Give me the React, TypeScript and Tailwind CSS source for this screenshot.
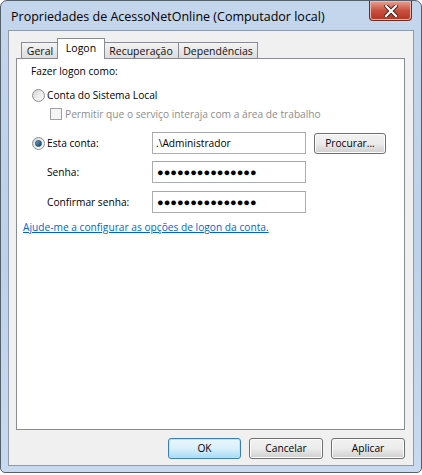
import React from "react";

const font = { fontFamily: "'Open Sans', 'Noto Sans', sans-serif" };

function Radio({ checked }: { checked?: boolean }) {
  return (
    <span className="relative inline-flex h-[13px] w-[13px] shrink-0 items-center justify-center rounded-full border border-[#8e8f8f] bg-gradient-to-br from-[#d4d4d4] via-[#ececec] to-[#fafafa]">
      {checked && (
        <span className="h-[7px] w-[7px] rounded-full border border-[#1d4f76] bg-gradient-to-br from-[#6aa8d4] to-[#0e3e63]" />
      )}
    </span>
  );
}

function Tab({ label, selected, w, ml }: { label: string; selected?: boolean; w: string; ml: string }) {
  if (selected) {
    return (
      <div
        className={
          "relative z-10 mb-[-1px] flex h-[21px] justify-center border border-b-0 border-[#898c95] bg-white pt-[2px] text-[10.5px] leading-[14px] text-black " +
          w +
          " " +
          ml
        }
      >
        {label}
      </div>
    );
  }
  return (
    <div
      className={
        "flex h-[16px] items-center justify-center border border-b-0 border-[#898c95] bg-gradient-to-b from-[#f4f4f4] to-[#dcdcdc] text-[10.5px] leading-[14px] text-[#111] " +
        w +
        " " +
        ml
      }
    >
      {label}
    </div>
  );
}

function Field({ value, dots }: { value?: string; dots?: boolean }) {
  return (
    <div className="flex h-[22px] w-[154px] items-center border border-[#abadb3] border-t-[#a3a6ad] bg-white px-[3px] text-[10.2px]">
      {dots ? (
        <span className="pl-[1px] text-[11px] tracking-[0px] text-black">{"●●●●●●●●●●●●●●●"}</span>
      ) : (
        <span>{value}</span>
      )}
    </div>
  );
}

function Btn({ label, w, def }: { label: string; w: string; def?: boolean }) {
  return (
    <div
      className={
        "flex h-[21px] items-center justify-center rounded-[3px] border text-[10.2px] text-black " +
        w +
        (def
          ? " border-[#3c7fb1] bg-gradient-to-b from-[#eaf6fd] via-[#d9f0fc] to-[#a7d9f5] shadow-[inset_0_0_0_1px_#b8e4fb]"
          : " border-[#707070] bg-gradient-to-b from-[#f2f2f2] via-[#ebebeb] to-[#cfcfcf] shadow-[inset_0_0_0_1px_#fcfcfc]")
      }
    >
      {label}
    </div>
  );
}

export default function App() {
  return (
    <div style={font} className="h-[475px] w-[422px] bg-white">
      <div className="relative flex h-[473px] w-[422px] flex-col rounded-t-[7px] rounded-b-[5px] border border-[#55606d] bg-gradient-to-b from-[#c4d6ec] via-[#bcd1ea] to-[#c8daef]">
        {/* title bar */}
        <div className="flex h-[29px] items-center pl-[10px] pt-[3px] text-[12.5px] text-black">
          Propriedades de AcessoNetOnline (Computador local)
        </div>
        {/* close button */}
        <div className="absolute right-[9px] top-0 flex h-[20px] w-[43px] items-center justify-center rounded-b-[4px] border border-t-0 border-[#6d2a24] bg-gradient-to-b from-[#e8a193] via-[#c8503f] to-[#b5321f] shadow-[inset_0_0_0_1px_#f0b9ae]">
          <svg width="14" height="12" viewBox="0 0 14 12">
            <path d="M2 1 L12 11 M12 1 L2 11" stroke="#3b1d1a" strokeWidth="4" strokeLinecap="square" />
            <path d="M2 1 L12 11 M12 1 L2 11" stroke="#ffffff" strokeWidth="2.2" strokeLinecap="square" />
          </svg>
        </div>

        {/* client area */}
        <div className="mx-[7px] flex h-[436px] flex-col border border-[#8d9bb0] bg-[#f0f0f0] pl-[7px] pr-[8px] pt-[7px]">
          {/* tabs */}
          <div className="flex h-[20px] items-end pl-[5px]">
            <Tab label="Geral" w="w-[38px]" ml="ml-0" />
            <Tab label="Logon" selected w="w-[48px]" ml="-ml-[2px]" />
            <Tab label="Recuperação" w="w-[76px]" ml="-ml-[2px]" />
            <Tab label="Dependências" w="w-[80px]" ml="-ml-px" />
          </div>
          {/* panel */}
          <div className="flex h-[372px] flex-col border border-[#898c95] bg-white text-[10.2px] leading-[14px] text-black">
            <div className="mt-[5px] pl-[14px]">Fazer logon como:</div>
            <div className="mt-[10px] flex h-[14px] items-center gap-[2px] pl-[15px]">
              <Radio />
              <span>Conta do Sistema Local</span>
            </div>
            <div className="mt-[5px] flex h-[14px] items-center gap-[3px] pl-[33px] text-[#8d8d8d]">
              <span className="h-[12px] w-[12px] border border-[#a0a0a0] bg-[#f4f4f4]" />
              <span>Permitir que o serviço interaja com a área de trabalho</span>
            </div>
            <div className="mt-[11px] flex items-center">
              <div className="flex w-[135px] items-center gap-[2px] pl-[15px]">
                <Radio checked />
                <span>Esta conta:</span>
              </div>
              <Field value=".\Administrador" />
              <div className="ml-[8px]">
                <Btn label="Procurar..." w="w-[72px]" />
              </div>
            </div>
            <div className="mt-[7px] flex items-center">
              <div className="w-[135px] pl-[30px]">Senha:</div>
              <Field dots />
            </div>
            <div className="mt-[8px] flex items-center">
              <div className="w-[135px] pl-[30px]">Confirmar senha:</div>
              <Field dots />
            </div>
            <div className="mt-[7px] pl-[6px] text-[#0066cc] underline">Ajude-me a configurar as opções de logon da conta.</div>
          </div>
          {/* buttons */}
          <div className="mt-[8px] flex justify-end gap-[8px] pr-0">
            <Btn label="OK" w="w-[73px]" def />
            <Btn label="Cancelar" w="w-[74px]" />
            <Btn label="Aplicar" w="w-[74px]" />
          </div>
        </div>
      </div>
    </div>
  );
}
